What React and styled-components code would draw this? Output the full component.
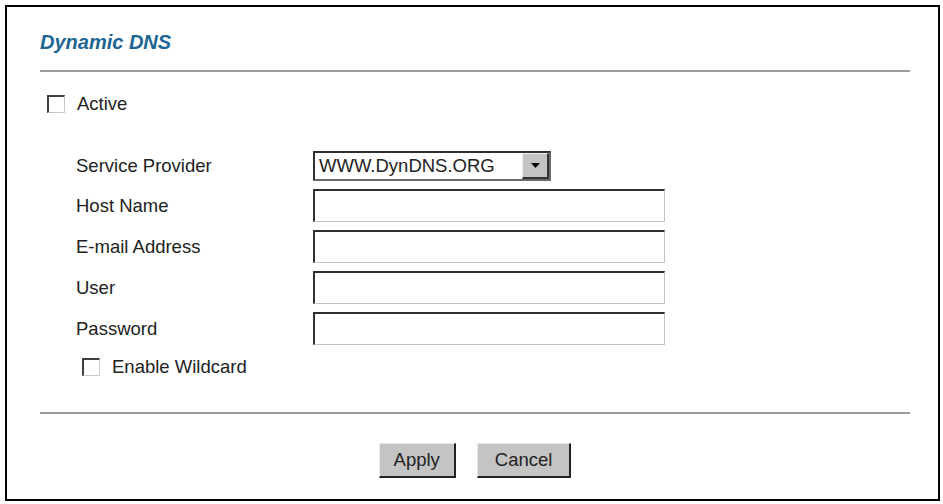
import React from 'react';
import styled, { createGlobalStyle } from 'styled-components';

const GlobalStyle = createGlobalStyle`
    body {
        margin: 0;
        background: #fff;
        font-family: "Liberation Sans", Arial, sans-serif;
        color: #222;
    }
    * {
        box-sizing: border-box;
    }
`;

const Frame = styled.div`
    margin: 5px 0 0 5px;
    width: 935px;
    height: 496px;
    border: 2px solid #000;
    padding: 23px 28px 0 33px;
`;
const Title = styled.div`
    font-size: 20px;
    line-height: 24px;
    font-weight: bold;
    font-style: italic;
    color: #1d6592;
`;
const Rule = styled.div`
    height: 2px;
    background: #9c9c9c;
    margin-top: ${(p) => p.top}px;
`;
const CheckRow = styled.label`
    display: flex;
    align-items: center;
    height: 20px;
    margin-top: ${(p) => p.top}px;
    padding-left: ${(p) => p.indent}px;
    font-size: 18.5px;
    line-height: 20px;
`;
const Box = styled.span`
    width: 18px;
    height: 18px;
    margin-right: 12px;
    background: #fff;
    border-top: 2px solid #404040;
    border-left: 2px solid #404040;
    border-right: 1px solid #c8c8c8;
    border-bottom: 1px solid #c8c8c8;
`;
const Form = styled.div`
    display: grid;
    grid-template-columns: 237px 1fr;
    grid-template-rows: 30px repeat(4, 33px);
    row-gap: 8px;
    margin-top: 37.5px;
    padding-left: 36px;
    align-items: center;
`;
const Label = styled.div`
    font-size: 18.5px;
    line-height: 20px;
`;
const Select = styled.div`
    display: flex;
    align-items: center;
    width: 238px;
    height: 30px;
    background: #fff;
    border-top: 2px solid #303030;
    border-left: 2px solid #303030;
    border-right: 2px solid #6a6a6a;
    border-bottom: 2px solid #6a6a6a;
    padding: 0 0 0 4px;
    font-size: 18.5px;
    justify-content: space-between;
`;
const Arrow = styled.span`
    display: flex;
    align-items: center;
    justify-content: center;
    width: 27px;
    height: 26px;
    background: #c4c4c4;
    border-top: 1px solid #eee;
    border-left: 1px solid #eee;
    border-right: 2px solid #333;
    border-bottom: 2px solid #333;
`;
const Field = styled.input`
    width: 352px;
    height: 33px;
    background: #fff;
    border-top: 2px solid #303030;
    border-left: 2px solid #303030;
    border-right: 1px solid #c4c4c4;
    border-bottom: 1px solid #c4c4c4;
    outline: none;
    padding: 0 4px;
`;
const Buttons = styled.div`
    display: flex;
    justify-content: center;
    gap: 21px;
    margin-top: 29px;
`;
const Button = styled.button`
    height: 35px;
    padding: 0 ${(p) => p.pad}px;
    background: #c4c4c4;
    font-family: "Liberation Sans", Arial, sans-serif;
    font-size: 18.5px;
    color: #222;
    border-top: 1px solid #eaeaea;
    border-left: 1px solid #eaeaea;
    border-right: 2px solid #222;
    border-bottom: 2px solid #222;
`;

const fields = ['Host Name', 'E-mail Address', 'User', 'Password'];

const App = () => {
    return (
        <>
            <GlobalStyle />
            <Frame>
                <Title>Dynamic DNS</Title>
                <Rule top={16} />
                <CheckRow top={21.5} indent={7}><Box />Active</CheckRow>
                <Form>
                    <Label>Service Provider</Label>
                    <Select>
                        <span>WWW.DynDNS.ORG</span>
                        <Arrow>
                            <svg width="9" height="5" viewBox="0 0 9 5"><path d="M0 0h9L4.5 5z" fill="#000" /></svg>
                        </Arrow>
                    </Select>
                    {fields.map((f) => (
                        <React.Fragment key={f}>
                            <Label>{f}</Label>
                            <Field type={f === 'Password' ? 'password' : 'text'} />
                        </React.Fragment>
                    ))}
                </Form>
                <CheckRow top={11.5} indent={42}><Box />Enable Wildcard</CheckRow>
                <Rule top={35.5} />
                <Buttons>
                    <Button pad={14}>Apply</Button>
                    <Button pad={17}>Cancel</Button>
                </Buttons>
            </Frame>
        </>
    );
};

export default App;
